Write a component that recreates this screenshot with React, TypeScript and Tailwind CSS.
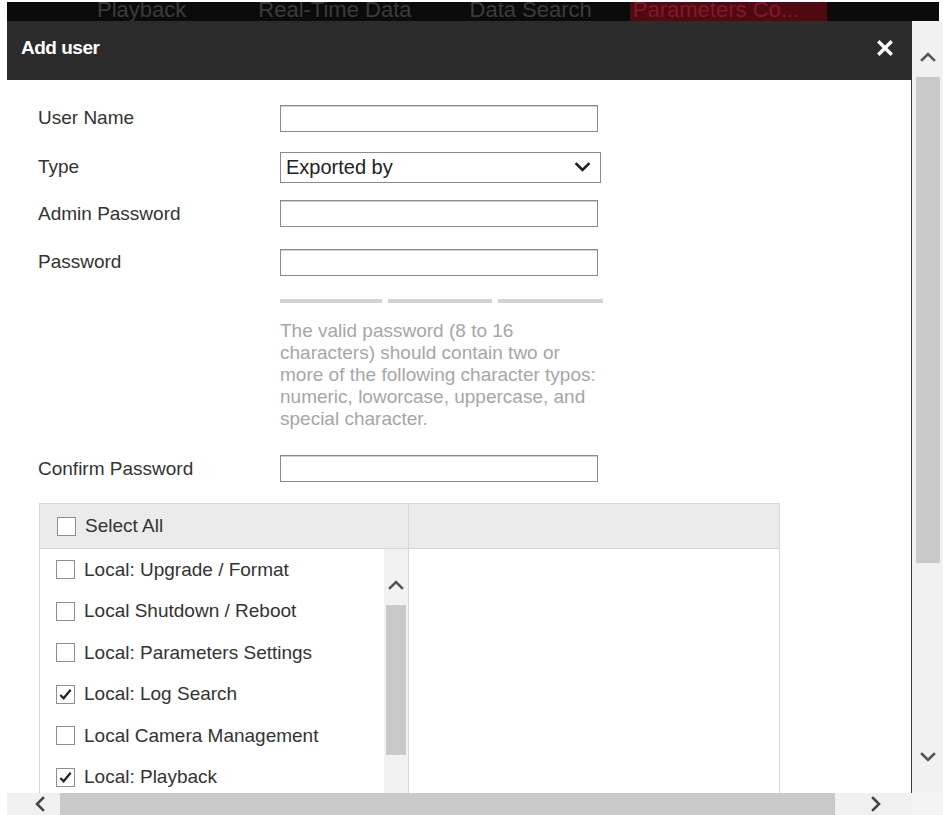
import React from "react";

const Chevron = ({ dir, className }: { dir: "up" | "down" | "left" | "right"; className?: string }) => {
  const d =
    dir === "up"
      ? "M2 9 L8 3 L14 9"
      : dir === "down"
      ? "M2 3 L8 9 L14 3"
      : dir === "left"
      ? "M9 2 L3 8 L9 14"
      : "M3 2 L9 8 L3 14";
  const vb = dir === "up" || dir === "down" ? "0 0 16 12" : "0 0 12 16";
  return (
    <svg viewBox={vb} className={className} fill="none" stroke="currentColor" strokeWidth={2.6} strokeLinecap="square">
      <path d={d} />
    </svg>
  );
};

const Checkbox = ({ checked }: { checked?: boolean }) => (
  <div className="w-[19px] h-[19px] border border-[#8e8e8e] bg-white shrink-0 flex items-center justify-center">
    {checked && (
      <svg viewBox="0 0 16 16" className="w-[15px] h-[15px]" fill="none" stroke="#222" strokeWidth={2.4}>
        <path d="M2.5 8.5 L6 12 L13.5 3" />
      </svg>
    )}
  </div>
);

const TextBox = () => <div className="w-[318px] h-[27px] border border-[#8a8a8a] bg-white shadow-[inset_0_1px_0_#cfcfcf]" />;

const items: { label: string; checked?: boolean }[] = [
  { label: "Local: Upgrade / Format" },
  { label: "Local Shutdown / Reboot" },
  { label: "Local: Parameters Settings" },
  { label: "Local: Log Search", checked: true },
  { label: "Local Camera Management" },
  { label: "Local: Playback", checked: true },
  { label: "Local: Manual Record" },
];

export default function App() {
  return (
    <div className="w-[943px] h-[815px] bg-white overflow-hidden flex flex-col font-[family-name:Liberation_Sans,Arial,sans-serif]">
      {/* top nav strip */}
      <div className="pt-[2px] pl-[7px] pr-[4px] shrink-0">
        <div className="h-[19px] bg-[#0b0b0b] flex overflow-hidden text-[22px] leading-[22px] text-[#3b3b3b] whitespace-nowrap">
          <span className="ml-[90px] mt-[-3px]">Playback</span>
          <span className="ml-[72px] mt-[-3px]">Real-Time Data</span>
          <span className="ml-[58px] mt-[-3px]">Data Search</span>
          <div className="ml-[38px] w-[197px] bg-[#4e0911] pl-[3px]">
            <span className="block mt-[-3px] text-[#86172a]">Parameters Co...</span>
          </div>
        </div>
      </div>

      {/* main area */}
      <div className="flex pl-[7px] h-[772px] shrink-0">
        <div className="w-[905px] flex flex-col">
          {/* header */}
          <div className="h-[59px] bg-[#2c2c2c] flex items-center justify-between pl-[14px] pr-[19px] shrink-0">
            <span className="text-white font-bold text-[19px] tracking-[-0.5px] mt-[-4px]">Add user</span>
            <svg viewBox="0 0 16 16" className="w-[16px] h-[16px] mt-[-5px]" stroke="white" strokeWidth={3.4} strokeLinecap="square">
              <path d="M2.5 2.5 L13.5 13.5 M13.5 2.5 L2.5 13.5" />
            </svg>
          </div>

          {/* content */}
          <div className="flex-1 border-r border-[#3a3a3a] overflow-hidden text-[19px] text-[#333]">
            <div className="pl-[31px] pt-[24px] flex flex-col">
              <div className="flex items-center">
                <div className="w-[242px]">User Name</div>
                <TextBox />
              </div>
              <div className="flex items-center mt-[19px]">
                <div className="w-[242px]">Type</div>
                <div className="w-[321px] h-[31px] border border-[#8a8a8a] bg-white flex items-center justify-between pl-[5px] pr-[9px]">
                  <span className="text-[20px] text-[#222]">Exported by</span>
                  <Chevron dir="down" className="w-[17px] h-[12px] text-[#222]" />
                </div>
              </div>
              <div className="flex items-center mt-[17px]">
                <div className="w-[242px]">Admin Password</div>
                <TextBox />
              </div>
              <div className="flex items-center mt-[20px]">
                <div className="w-[242px]">Password</div>
                <TextBox />
              </div>
              <div className="ml-[242px] mt-[22px] flex gap-[6px] w-[323px]">
                <div className="h-[4px] w-[102px] bg-[#d3d3d3]" />
                <div className="h-[4px] w-[104px] bg-[#d3d3d3]" />
                <div className="h-[4px] w-[105px] bg-[#d3d3d3]" />
              </div>
              <div className="ml-[242px] mt-[17px] text-[#a6a6a6] leading-[22px] whitespace-nowrap">
                The valid password (8 to 16
                <br />
                characters) should contain two or
                <br />
                more of the following character typos:
                <br />
                numeric, loworcase, uppercase, and
                <br />
                special character.
              </div>
              <div className="flex items-center mt-[25px]">
                <div className="w-[242px]">Confirm Password</div>
                <TextBox />
              </div>
            </div>

            {/* permissions table */}
            <div className="ml-[32px] mt-[20px] w-[741px] border border-[#d6d6d6] flex flex-col">
              <div className="h-[45px] bg-[#ebebeb] flex border-b border-[#d6d6d6]">
                <div className="w-[369px] border-r border-[#d6d6d6] flex items-center pl-[17px] gap-[9px]">
                  <Checkbox />
                  <span>Select All</span>
                </div>
                <div className="flex-1" />
              </div>
              <div className="flex h-[260px]">
                <div className="w-[369px] border-r border-[#d6d6d6] flex">
                  <div className="flex-1 flex flex-col">
                    {items.map((it) => (
                      <div key={it.label} className="h-[41.5px] shrink-0 flex items-center pl-[16px] gap-[9px] whitespace-nowrap">
                        <Checkbox checked={it.checked} />
                        <span>{it.label}</span>
                      </div>
                    ))}
                  </div>
                  <div className="w-[24px] bg-[#f2f2f2] flex flex-col items-center">
                    <Chevron dir="up" className="w-[16px] h-[12px] text-[#555] mt-[30px]" />
                    <div className="w-[20px] h-[150px] bg-[#c9c9c9] mt-[14px]" />
                  </div>
                </div>
                <div className="flex-1 bg-white" />
              </div>
            </div>
          </div>
        </div>

        {/* vertical scrollbar */}
        <div className="w-[31px] bg-[#f1f1f1] flex flex-col items-center">
          <Chevron dir="up" className="w-[16px] h-[12px] text-[#555] mt-[30px]" />
          <div className="w-[24px] h-[486px] bg-[#c9c9c9] mt-[14px]" />
          <Chevron dir="down" className="w-[16px] h-[12px] text-[#555] mt-[188px]" />
        </div>
      </div>

      {/* horizontal scrollbar */}
      <div className="flex pl-[7px] h-[22px] shrink-0">
        <div className="w-[905px] bg-[#f0f0f0] flex items-center">
          <Chevron dir="left" className="w-[12px] h-[16px] text-[#444] ml-[27px]" />
          <div className="w-[775px] h-[22px] bg-[#c9c9c9] ml-[14px]" />
          <Chevron dir="right" className="w-[12px] h-[16px] text-[#444] ml-[35px]" />
        </div>
        <div className="flex-1 bg-[#f4f4f4]" />
      </div>
    </div>
  );
}
